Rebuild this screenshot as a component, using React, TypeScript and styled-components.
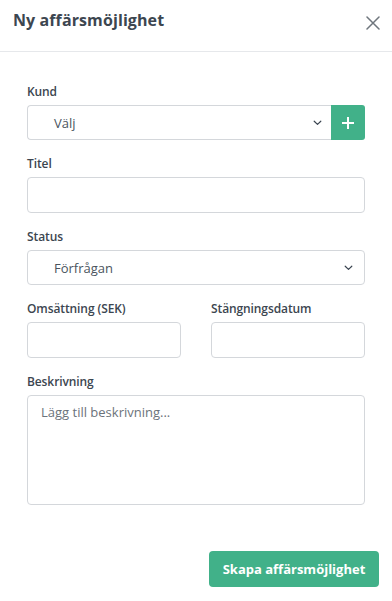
import React, { FunctionComponent, ReactElement } from 'react'
import styled, { createGlobalStyle } from 'styled-components'

const GlobalStyle = createGlobalStyle`
  body {
    margin: 0;
    background: #fff;
    font-family: 'Open Sans', 'Liberation Sans', sans-serif;
    color: #3f4a54;
  }
`

const ChevronDown: FunctionComponent = (): ReactElement => (
  <svg width="9" height="6" viewBox="0 0 9 6" fill="none">
    <path d="M1.2 1.2 L4.5 4.4 L7.8 1.2" stroke="#3a4450" strokeWidth="1.2" strokeLinecap="round" strokeLinejoin="round" />
  </svg>
)

const App: FunctionComponent = (): ReactElement => {
  return (
    <>
      <GlobalStyle />
      <Modal>
        <Header>
          <Title>Ny affärsmöjlighet</Title>
          <CloseButton aria-label="Stäng">
            <svg width="14" height="14" viewBox="0 0 14 14">
              <path d="M1 1 L13 13 M13 1 L1 13" stroke="#6f767d" strokeWidth="1.5" strokeLinecap="round" />
            </svg>
          </CloseButton>
        </Header>
        <Body>
          <Field>
            <Label>Kund</Label>
            <InputGroup>
              <SelectBox $joined>
                <SelectText>Välj</SelectText>
                <ChevronDown />
              </SelectBox>
              <AddButton aria-label="Lägg till kund">
                <svg width="14" height="14" viewBox="0 0 14 14">
                  <path d="M7 1 V13 M1 7 H13" stroke="#fff" strokeWidth="2" />
                </svg>
              </AddButton>
            </InputGroup>
          </Field>
          <Field>
            <Label>Titel</Label>
            <Input />
          </Field>
          <Field>
            <Label>Status</Label>
            <SelectBox>
              <SelectText>Förfrågan</SelectText>
              <ChevronDown />
            </SelectBox>
          </Field>
          <Row>
            <Field>
              <Label>Omsättning (SEK)</Label>
              <Input />
            </Field>
            <Field>
              <Label>Stängningsdatum</Label>
              <Input />
            </Field>
          </Row>
          <Field>
            <Label>Beskrivning</Label>
            <TextArea placeholder="Lägg till beskrivning..." />
          </Field>
        </Body>
        <Footer>
          <PrimaryButton>Skapa affärsmöjlighet</PrimaryButton>
        </Footer>
      </Modal>
    </>
  )
}

const Modal = styled.div`
  width: 392px;
  height: 601px;
  display: flex;
  flex-direction: column;
  background: #fff;
`

const Header = styled.div`
  height: 52px;
  flex-shrink: 0;
  box-sizing: border-box;
  display: flex;
  align-items: flex-start;
  justify-content: space-between;
  padding: 9px 12px 0 13px;
  border-bottom: 1px solid #e6e8eb;
`

const Title = styled.h2`
  margin: 0;
  font-size: 16px;
  font-weight: 700;
  color: #3c4650;
  line-height: 22px;
  letter-spacing: 0.1px;
`

const CloseButton = styled.button`
  border: none;
  background: none;
  padding: 0;
  margin-top: 7px;
  width: 14px;
  height: 14px;
  cursor: pointer;
  display: flex;
`

const Body = styled.div`
  padding: 32px 27px 0 27px;
  display: flex;
  flex-direction: column;
  gap: 16px;
`

const Field = styled.div`
  display: flex;
  flex-direction: column;
  gap: 5px;
  min-width: 0;
`

const Label = styled.label`
  font-size: 12px;
  font-weight: 600;
  color: #3c4650;
  line-height: 16px;
  letter-spacing: -0.1px;
`

const InputGroup = styled.div`
  display: flex;
  height: 35px;
`

const SelectBox = styled.div<{ $joined?: boolean }>`
  flex: ${(p) => (p.$joined ? '1' : 'none')};
  height: 35px;
  box-sizing: border-box;
  display: flex;
  align-items: center;
  justify-content: space-between;
  padding: 0 ${(p) => (p.$joined ? '9px' : '11px')} 0 26px;
  border: 1px solid #d4d7db;
  border-radius: ${(p) => (p.$joined ? '4px 0 0 4px' : '4px')};
  border-right: ${(p) => (p.$joined ? 'none' : '1px solid #d4d7db')};
`

const SelectText = styled.span`
  font-size: 13px;
  color: #4a545e;
`

const AddButton = styled.button`
  width: 34px;
  height: 35px;
  border: none;
  border-radius: 0 3px 3px 0;
  background: #41b189;
  display: flex;
  align-items: center;
  justify-content: center;
  padding: 0;
  cursor: pointer;
`

const Input = styled.input`
  height: 36px;
  box-sizing: border-box;
  border: 1px solid #d4d7db;
  border-radius: 4px;
  width: 100%;
  font-family: inherit;
`

const Row = styled.div`
  display: grid;
  grid-template-columns: 1fr 1fr;
  gap: 30px;
`

const TextArea = styled.textarea`
  height: 110px;
  box-sizing: border-box;
  border: 1px solid #d4d7db;
  border-radius: 4px;
  padding: 7px 13px;
  resize: none;
  font-family: inherit;
  font-size: 13px;

  &::placeholder {
    color: #6b737b;
  }
`

const Footer = styled.div`
  display: flex;
  justify-content: flex-end;
  padding: 46px 13px 0 0;
`

const PrimaryButton = styled.button`
  width: 170px;
  height: 36px;
  border: none;
  border-radius: 4px;
  background: #41b189;
  color: #fff;
  font-family: inherit;
  font-size: 13px;
  font-weight: 700;
  cursor: pointer;
`

export default App
